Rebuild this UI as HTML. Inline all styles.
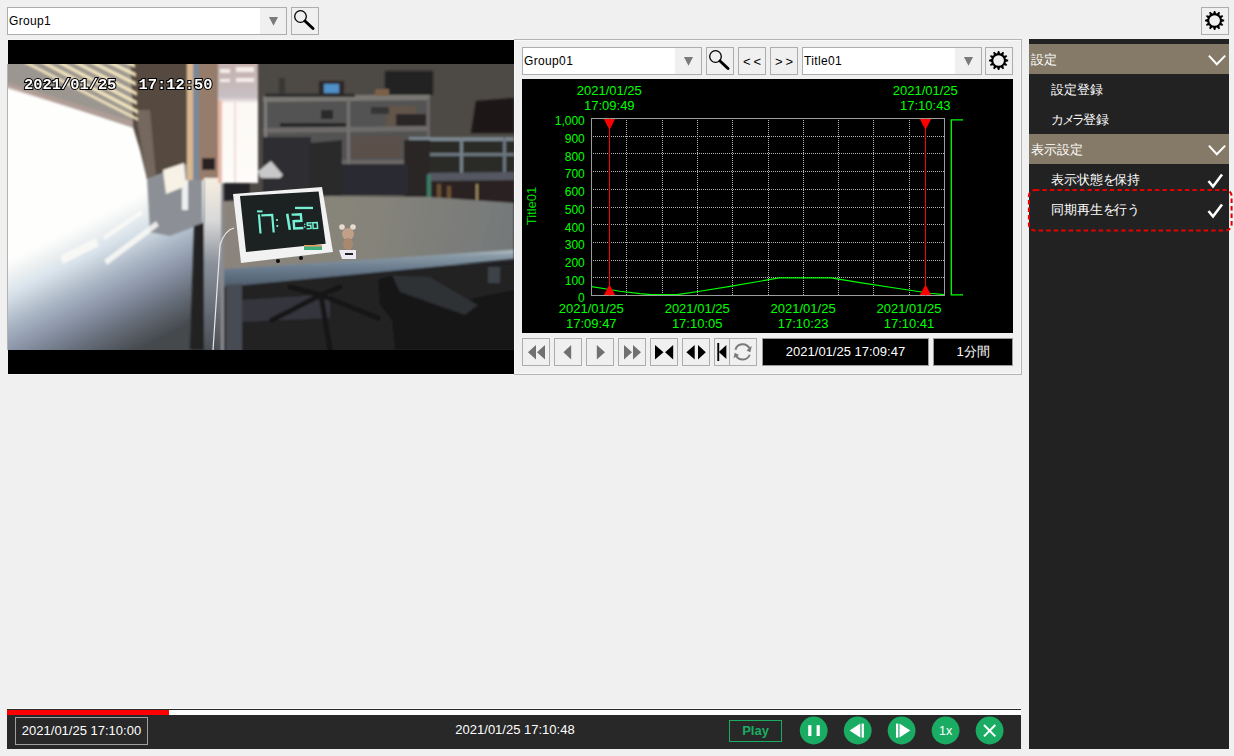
<!DOCTYPE html>
<html><head><meta charset="utf-8">
<style>
*{margin:0;padding:0;box-sizing:border-box}
html,body{width:1234px;height:756px;overflow:hidden;background:#f0f0f0;font-family:"Liberation Sans",sans-serif;font-size:12px;color:#000}
.a{position:absolute}
.btn{position:absolute;width:28px;height:28px;border:1px solid #adadad;background:#f0f0f0}
.combo{position:absolute;height:28px;border:1px solid #adadad;background:#fff}
.combo .dd{position:absolute;right:0;top:0;bottom:0;width:26px;background:#f0f0f0}
.combo .tri{position:absolute;width:0;height:0;border-left:5px solid transparent;border-right:5px solid transparent;border-top:9px solid #7a7a7a}
.combo .t{position:absolute;left:1px;top:6px;font-size:12px;line-height:14px;letter-spacing:0.35px}
.side{position:absolute;left:1029px;top:39px;width:200px;height:710px;background:#222}
.sh{position:absolute;left:0;width:200px;height:30px;background:#857a67;color:#fff;font-size:13px}
.si{position:absolute;left:0;width:200px;height:30px;color:#fff;font-size:13px}
</style></head><body>

<!-- top combo -->
<div class="combo" style="left:7px;top:7px;width:280px">
  <div class="t" style="left:1px">Group1</div>
  <div class="dd"><svg class="a" style="left:9px;top:9px" width="10" height="10"><polygon points="0,0 9,0 4.5,8.8" fill="#7a7a7a"/></svg></div>
</div>
<div class="btn" style="left:291px;top:7px">
  <svg width="26" height="26" class="a" style="left:0;top:0"><circle cx="8.5" cy="8.5" r="5.8" fill="none" stroke="#000" stroke-width="1.3"/><line x1="13" y1="13" x2="21" y2="20.5" stroke="#000" stroke-width="3" stroke-linecap="round"/></svg>
</div>
<div class="btn" style="left:1201px;top:7px">
  <svg width="26" height="26" class="a" style="left:0;top:0" id="gear1"><polygon points="11.21,5.33 11.93,2.92 13.27,2.92 13.99,5.33 14.98,5.60 16.81,3.87 17.97,4.54 17.39,6.99 18.11,7.71 20.56,7.13 21.23,8.29 19.50,10.12 19.77,11.11 22.18,11.83 22.18,13.17 19.77,13.89 19.50,14.88 21.23,16.71 20.56,17.87 18.11,17.29 17.39,18.01 17.97,20.46 16.81,21.13 14.98,19.40 13.99,19.67 13.27,22.08 11.93,22.08 11.21,19.67 10.22,19.40 8.39,21.13 7.23,20.46 7.81,18.01 7.09,17.29 4.64,17.87 3.97,16.71 5.70,14.88 5.43,13.89 3.02,13.17 3.02,11.83 5.43,11.11 5.70,10.12 3.97,8.29 4.64,7.13 7.09,7.71 7.81,6.99 7.23,4.54 8.39,3.87 10.22,5.60" fill="#000"/><circle cx="12.6" cy="12.5" r="5.3" fill="#f0f0f0"/></svg>
</div>

<!-- main panel -->
<div class="a" style="left:7px;top:39px;width:507px;height:1px;background:#f4f4f4"></div>
<div class="a" style="left:7px;top:374px;width:507px;height:1px;background:#f4f4f4"></div>
<div class="a" style="left:7px;top:64px;width:1px;height:286px;background:#b4b4b4"></div>
<div class="a" style="left:514px;top:39px;width:508px;height:336px;border:1px solid #b4b4b4;border-left:none;box-shadow:inset 1px 1px 0 #f8f8f8,inset -1px -1px 0 #f8f8f8;background:#f0f0f0"></div>
<div class="a" style="left:8px;top:40px;width:506px;height:334px;background:#000"></div>
<div class="a" id="photo" style="left:8px;top:64px;width:506px;height:286px;background:#777;overflow:hidden"><svg width="506" height="286" style="position:absolute;left:0;top:0">
<defs>
<filter id="bl" x="-5%" y="-5%" width="110%" height="110%"><feGaussianBlur stdDeviation="1.1"/></filter>
<filter id="bl0" x="-5%" y="-5%" width="110%" height="110%"><feGaussianBlur stdDeviation="0.45"/></filter>
<filter id="bl3" x="-30%" y="-30%" width="160%" height="160%"><feGaussianBlur stdDeviation="8"/></filter>
<filter id="bl4" x="-30%" y="-30%" width="160%" height="160%"><feGaussianBlur stdDeviation="4"/></filter>
<linearGradient id="lwalld" gradientUnits="userSpaceOnUse" x1="106" y1="212" x2="168" y2="336">
<stop offset="0" stop-color="#fefefc"/><stop offset="0.08" stop-color="#f2f4f4"/><stop offset="0.226" stop-color="#d8e2ea"/><stop offset="0.419" stop-color="#aab6c4"/><stop offset="0.581" stop-color="#8c96a8"/><stop offset="0.774" stop-color="#68707c"/><stop offset="1" stop-color="#44484c"/>
</linearGradient>
<linearGradient id="curt" gradientUnits="userSpaceOnUse" x1="0" y1="64" x2="0" y2="183">
<stop offset="0" stop-color="#c4b0ac"/><stop offset="0.28" stop-color="#c8c0c4"/><stop offset="0.33" stop-color="#fcf8f4"/><stop offset="1" stop-color="#fefcfa"/>
</linearGradient>
<linearGradient id="tableg" gradientUnits="userSpaceOnUse" x1="224" y1="196" x2="514" y2="260">
<stop offset="0" stop-color="#8c847c"/><stop offset="0.5" stop-color="#86847a"/><stop offset="1" stop-color="#74787a"/>
</linearGradient>
<linearGradient id="bandg" gradientUnits="userSpaceOnUse" x1="0" y1="250" x2="0" y2="287">
<stop offset="0" stop-color="#b8c4c8"/><stop offset="0.15" stop-color="#8a9aa6"/><stop offset="0.5" stop-color="#6a7c8e"/><stop offset="1" stop-color="#4e5c6a"/>
</linearGradient>
<linearGradient id="postg" gradientUnits="userSpaceOnUse" x1="0" y1="178" x2="0" y2="350">
<stop offset="0" stop-color="#f6eee0"/><stop offset="0.25" stop-color="#d8d8d8"/><stop offset="0.5" stop-color="#8a909a"/><stop offset="1" stop-color="#4a4e54"/>
</linearGradient>
</defs>
<g transform="translate(-8,-64)">
<g filter="url(#bl)">
<!-- base under table -->
<rect x="0" y="50" width="520" height="310" fill="#242426"/>
<!-- back wall -->
<rect x="250" y="50" width="270" height="150" fill="#4e4a44"/>
<!-- left wall -->
<polygon points="0,50 204,50 204,360 0,360" fill="url(#lwalld)"/>
</g>
<g filter="url(#bl)">
<!-- stripe zone top-left -->
<polygon points="0,50 131,50 134,128 0,84" fill="#9c9690"/>
<polygon points="0,80 138,123 138,128 0,86" fill="#b8a098" opacity="0.7"/>
<!-- pillar -->
<polygon points="130,50 188,50 188,164 147,179 140,150 133,127" fill="#544a40"/>
<polygon points="136,110 150,110 156,176 147,179 138,127" fill="#74685e"/>
<!-- gray wall under pillar -->
<polygon points="147,179 188,164 202,172 202,224 170,236 150,232" fill="#8c9096"/>
<rect x="182" y="180" width="6" height="30" fill="#eef0f0"/>
<!-- bright patch under pillar -->
<polygon points="163,170 184,163 186,186 166,194" fill="#f8f2e6"/>
<!-- strip & column -->
<rect x="187" y="50" width="6" height="130" fill="#d8b890"/>
<rect x="193" y="50" width="6" height="130" fill="#7a8898"/>
<rect x="199" y="50" width="19" height="130" fill="#967c6a"/>
<rect x="202" y="158" width="13" height="12" fill="#2a2222"/>
<!-- corner & gap -->
<polygon points="194,226 206,222 206,350 190,350" fill="#222224"/>
<!-- post -->
<rect x="204" y="178" width="17" height="180" fill="url(#postg)"/>
<rect x="221" y="178" width="3" height="180" fill="#8a8a8e"/>
<!-- curtain -->
<polygon points="218,50 258,50 258,183 218,183" fill="url(#curt)"/>
<rect x="218" y="100" width="4" height="83" fill="#e8b8a8"/>
<rect x="234" y="100" width="2" height="83" fill="#f0dcd8"/>
<rect x="220" y="69" width="10" height="4" fill="#f4ece8"/>
<rect x="236" y="67" width="18" height="5" fill="#f4ece8"/>
<rect x="220" y="79" width="10" height="3" fill="#f4ece8"/>
<rect x="236" y="78" width="18" height="4" fill="#f4ece8"/>
<!-- shelves interior -->
<rect x="263" y="100" width="167" height="65" fill="#525252"/>
<rect x="386" y="106" width="30" height="20" fill="#62554a"/>
<rect x="352" y="136" width="50" height="22" fill="#5a5048"/>
<polygon points="263,96 430,94 430,100 263,102" fill="#7a7874"/>
<polygon points="263,128 430,126 430,131 263,133" fill="#6e6c6a"/>
<rect x="342" y="160" width="64" height="4" fill="#6a6866"/>
<rect x="264" y="98" width="3" height="60" fill="#7e7c7a"/>
<rect x="347" y="98" width="3" height="95" fill="#747270"/>
<rect x="427" y="98" width="3" height="40" fill="#6a6866"/>
<rect x="321" y="110" width="12" height="9" fill="#2a2a2a"/>
<rect x="371" y="107" width="18" height="7" fill="#343434"/>
<rect x="280" y="123" width="66" height="4" fill="#262626"/>
<rect x="396" y="114" width="30" height="12" fill="#2a2826"/>
<!-- top items -->
<rect x="385" y="71" width="48" height="24" fill="#222020"/>
<rect x="319" y="81" width="25" height="16" fill="#2e2626"/>
<rect x="324" y="84" width="15" height="9" fill="#5090c8"/>
<rect x="279" y="78" width="6" height="19" fill="#383836"/>
<rect x="375" y="89" width="14" height="7" fill="#7a6048"/>
<rect x="265" y="94" width="90" height="3" fill="#2a2a2a"/>
<!-- right monitor -->
<polygon points="476,101 514,98 514,133 471,133" fill="#1a1816"/>
<!-- rack -->
<rect x="409" y="137" width="105" height="37" fill="#2a2c26"/>
<rect x="409" y="137" width="105" height="4" fill="#7a868e"/>
<rect x="409" y="153" width="105" height="3" fill="#6a767e"/>
<rect x="460" y="137" width="3" height="37" fill="#76828a"/>
<rect x="503" y="137" width="3" height="37" fill="#6a767e"/>
<rect x="404" y="140" width="26" height="57" fill="#2a2828"/>
<!-- lower shelf interior -->
<rect x="342" y="164" width="66" height="31" fill="#2a2c30"/>
<!-- dark monitor & chair back -->
<rect x="263" y="137" width="48" height="58" fill="#2e2e30"/>
<polygon points="309,143 342,140 342,198 309,200" fill="#2c2c2c"/>
<!-- paper -->
<polygon points="258,171 271,161 283,175 280,178 260,178" fill="#c8c8c8"/>
<!-- dark box -->
<polygon points="428,173 514,172 514,181 428,182" fill="#545862"/>
<polygon points="428,181 514,180 514,206 430,203" fill="#2a2420"/>
<rect x="437" y="184" width="4" height="15" fill="#6a5030"/>
<rect x="447" y="186" width="4" height="14" fill="#6a5030"/>
<rect x="476" y="184" width="2" height="20" fill="#a09060"/>
<rect x="427" y="175" width="4" height="28" fill="#3a7a68"/>
<!-- floor -->
<rect x="224" y="265" width="290" height="95" fill="#222224"/>
<polygon points="242,300 330,294 330,318 242,322" fill="#34363c"/>
<!-- table top -->
<polygon points="224,201 330,196 428,197 514,203 514,252 224,270" fill="url(#tableg)"/>
<!-- front band -->
<polygon points="224,269 514,250 514,259 224,287" fill="url(#bandg)"/>
<!-- left leg -->
<polygon points="226,285 242,284 242,360 226,360" fill="#464c52"/>
<!-- right leg -->
<rect x="488" y="267" width="12" height="16" fill="#3e424a"/>
<!-- chair base -->
<g stroke="#141416" stroke-width="5" stroke-linecap="round" fill="none">
<path d="M321,295 L272,320 M321,295 L378,318 M321,295 L340,287 M321,295 L290,287 M321,295 L330,350"/>
</g>
<!-- right chair -->
<polygon points="378,280 395,274 430,278 465,300 514,290 514,350 395,350 392,320 380,305" fill="#181818"/>
<polygon points="392,275 430,277 478,305 465,315 400,292" fill="#2e3036"/>
</g>
<!-- light stripes (blinds) -->
<g filter="url(#bl)" fill="#f8eac0" opacity="0.95">
<polygon points="112,50 118,50 134,56 134,60"/>
<polygon points="96,50 103,50 135,64 135,68"/>
<polygon points="80,50 87,50 136,73 136,77"/>
<polygon points="64,50 71,50 136,82 136,86"/>
<polygon points="48,50 55,50 137,92 137,96"/>
<polygon points="32,50 39,50 137,101 137,105"/>
<polygon points="16,50 23,50 138,110 138,114"/>
<polygon points="2,52 8,52 138,118 138,121"/>
</g>
<!-- wall light streaks -->
<g filter="url(#bl)" fill="#fbfaf6" opacity="0.85">
<polygon points="103,236 141,210 143,214 105,240"/>
<polygon points="104,260 156,221 159,226 107,265"/>
<polygon points="60,256 96,238 99,246 63,264"/>
</g>
<!-- tablet -->
<g filter="url(#bl0)">
<polygon points="233,194 322,187 333,252 241,263" fill="#f2f2f2"/>
<polygon points="240,196 318.6,191.4 325.7,243.8 246,252" fill="#1c2024"/>
<rect x="304" y="246" width="18" height="4" fill="#40b080"/>
<rect x="304" y="245" width="18" height="1.5" fill="#e8a060"/>
<circle cx="278" cy="261" r="2" fill="#111"/><circle cx="301" cy="258" r="2" fill="#111"/>
</g>
<!-- bear -->
<g filter="url(#bl0)">
<circle cx="342" cy="227" r="2.8" fill="#e8dcd0"/><circle cx="353" cy="227" r="2.8" fill="#e8dcd0"/>
<ellipse cx="348" cy="234" rx="6" ry="6" fill="#c0a088"/>
<ellipse cx="348" cy="244" rx="5" ry="6" fill="#a88870"/>
<polygon points="339,250 356,250 356,259 342,259" fill="#eceaf0"/>
<rect x="345" y="253" width="8" height="2" fill="#222"/>
</g>
<!-- cable -->
<path d="M234,228 Q225,230 220,245 L213,350" fill="none" stroke="#e8e8ec" stroke-width="1.2" filter="url(#bl0)"/>
<!-- tablet digits -->
<g fill="none" stroke="#74f0d4" stroke-linecap="square" stroke-linejoin="miter" filter="url(#bl0)">
<path d="M259,215.4 L260.4,232.4" stroke-width="2.2"/>
<path d="M262.4,215.4 L272.2,214.8 L273.6,231.4" stroke-width="2.2"/>
<path d="M287.4,215 L289.6,228.6" stroke-width="2.6"/>
<path d="M292.8,214.6 L300.8,214.2 L301.4,220.8 L293.6,221.2 L294.2,228.4 L302.2,228" stroke-width="2.4"/>
<path d="M311,222.8 L307.2,223 L307.4,225.4 L310.8,225.2 L311,228.4 L307.4,228.6" stroke-width="1.5"/>
<path d="M312.8,222.8 L317.2,222.6 L317.6,228.2 L313.2,228.4 Z" stroke-width="1.5"/>
</g>
<g fill="#74f0d4" filter="url(#bl0)">
<circle cx="277" cy="220" r="1.1"/><circle cx="277.3" cy="226" r="1.1"/>
<circle cx="304.7" cy="224.3" r="0.8"/><circle cx="304.8" cy="226.9" r="0.8"/>
<rect x="257" y="210.4" width="5.5" height="2"/>
<rect x="295" y="206.8" width="18" height="2.3"/>
</g>
<!-- timestamp -->
<g font-family="Liberation Mono, monospace" font-weight="bold" font-size="15.4" fill="#fff" stroke="#000" stroke-width="2.1" paint-order="stroke">
<text x="24" y="88.6">2021/01/25</text>
<text x="138.5" y="88.6">17:12:50</text>
</g>
</g>
</svg>
</div>

<!-- chart controls -->
<div class="combo" style="left:522px;top:47px;width:180px">
  <div class="t">Group01</div>
  <div class="dd"><svg class="a" style="left:9px;top:9px" width="10" height="10"><polygon points="0,0 9,0 4.5,8.8" fill="#7a7a7a"/></svg></div>
</div>
<div class="btn" style="left:706px;top:47px">
  <svg width="26" height="26" class="a" style="left:0;top:0"><circle cx="8.5" cy="8.5" r="5.8" fill="none" stroke="#000" stroke-width="1.3"/><line x1="13" y1="13" x2="21" y2="20.5" stroke="#000" stroke-width="3" stroke-linecap="round"/></svg>
</div>
<div class="btn" style="left:738px;top:47px;font-size:13px;text-align:center;line-height:27px;letter-spacing:3px;text-indent:3px">&lt;&lt;</div>
<div class="btn" style="left:770px;top:47px;font-size:13px;text-align:center;line-height:27px;letter-spacing:3px;text-indent:3px">&gt;&gt;</div>
<div class="combo" style="left:802px;top:47px;width:180px">
  <div class="t">Title01</div>
  <div class="dd"><svg class="a" style="left:9px;top:9px" width="10" height="10"><polygon points="0,0 9,0 4.5,8.8" fill="#7a7a7a"/></svg></div>
</div>
<div class="btn" style="left:985px;top:47px">
  <svg width="26" height="26" class="a" style="left:0;top:0" id="gear2"><polygon points="11.21,5.33 11.93,2.92 13.27,2.92 13.99,5.33 14.98,5.60 16.81,3.87 17.97,4.54 17.39,6.99 18.11,7.71 20.56,7.13 21.23,8.29 19.50,10.12 19.77,11.11 22.18,11.83 22.18,13.17 19.77,13.89 19.50,14.88 21.23,16.71 20.56,17.87 18.11,17.29 17.39,18.01 17.97,20.46 16.81,21.13 14.98,19.40 13.99,19.67 13.27,22.08 11.93,22.08 11.21,19.67 10.22,19.40 8.39,21.13 7.23,20.46 7.81,18.01 7.09,17.29 4.64,17.87 3.97,16.71 5.70,14.88 5.43,13.89 3.02,13.17 3.02,11.83 5.43,11.11 5.70,10.12 3.97,8.29 4.64,7.13 7.09,7.71 7.81,6.99 7.23,4.54 8.39,3.87 10.22,5.60" fill="#000"/><circle cx="12.6" cy="12.5" r="5.3" fill="#f0f0f0"/></svg>
</div>

<!-- chart -->
<div class="a" style="left:522px;top:79px;width:491px;height:254px;background:#000"></div>
<svg class="a" style="left:522px;top:79px" width="491" height="254" id="chart" font-family="Liberation Sans, sans-serif"><line x1="104.5" y1="41.0" x2="104.5" y2="216.5" stroke="#b4b4b4" stroke-width="1" stroke-dasharray="1 1"/>
<line x1="140.5" y1="41.0" x2="140.5" y2="216.5" stroke="#b4b4b4" stroke-width="1" stroke-dasharray="1 1"/>
<line x1="175.5" y1="41.0" x2="175.5" y2="216.5" stroke="#b4b4b4" stroke-width="1" stroke-dasharray="1 1"/>
<line x1="210.5" y1="41.0" x2="210.5" y2="216.5" stroke="#b4b4b4" stroke-width="1" stroke-dasharray="1 1"/>
<line x1="246.5" y1="41.0" x2="246.5" y2="216.5" stroke="#b4b4b4" stroke-width="1" stroke-dasharray="1 1"/>
<line x1="281.5" y1="41.0" x2="281.5" y2="216.5" stroke="#b4b4b4" stroke-width="1" stroke-dasharray="1 1"/>
<line x1="316.5" y1="41.0" x2="316.5" y2="216.5" stroke="#b4b4b4" stroke-width="1" stroke-dasharray="1 1"/>
<line x1="351.5" y1="41.0" x2="351.5" y2="216.5" stroke="#b4b4b4" stroke-width="1" stroke-dasharray="1 1"/>
<line x1="387.5" y1="41.0" x2="387.5" y2="216.5" stroke="#b4b4b4" stroke-width="1" stroke-dasharray="1 1"/>
<line x1="71.0" y1="57.5" x2="422.5" y2="57.5" stroke="#b4b4b4" stroke-width="1" stroke-dasharray="1 1"/>
<line x1="71.0" y1="74.5" x2="422.5" y2="74.5" stroke="#b4b4b4" stroke-width="1" stroke-dasharray="1 1"/>
<line x1="71.0" y1="92.5" x2="422.5" y2="92.5" stroke="#b4b4b4" stroke-width="1" stroke-dasharray="1 1"/>
<line x1="71.0" y1="110.5" x2="422.5" y2="110.5" stroke="#b4b4b4" stroke-width="1" stroke-dasharray="1 1"/>
<line x1="71.0" y1="128.5" x2="422.5" y2="128.5" stroke="#b4b4b4" stroke-width="1" stroke-dasharray="1 1"/>
<line x1="71.0" y1="145.5" x2="422.5" y2="145.5" stroke="#b4b4b4" stroke-width="1" stroke-dasharray="1 1"/>
<line x1="71.0" y1="163.5" x2="422.5" y2="163.5" stroke="#b4b4b4" stroke-width="1" stroke-dasharray="1 1"/>
<line x1="71.0" y1="181.5" x2="422.5" y2="181.5" stroke="#b4b4b4" stroke-width="1" stroke-dasharray="1 1"/>
<line x1="71.0" y1="198.5" x2="422.5" y2="198.5" stroke="#b4b4b4" stroke-width="1" stroke-dasharray="1 1"/>
<polyline points="69.5,207.6 83.0,209.8 98.0,212.2 118.0,214.6 129.0,215.6 155.0,215.6 178.0,212.2 208.0,207.4 238.0,202.2 257.0,198.9 309.0,198.9 338.0,203.6 378.0,209.8 408.0,214.2 422.0,215.6" fill="none" stroke="#00ff00" stroke-width="1.15"/>
<rect x="69.5" y="39.5" width="353.0" height="177.0" fill="none" stroke="#9c9c9c" stroke-width="1"/>
<line x1="87.5" y1="39.5" x2="87.5" y2="216.5" stroke="#f00" stroke-width="1"/>
<polygon points="81.9,40.0 93.1,40.0 87.5,51.0" fill="#f00"/>
<polygon points="81.9,216.0 93.1,216.0 87.5,205.5" fill="#f00"/>
<line x1="403.5" y1="39.5" x2="403.5" y2="216.5" stroke="#f00" stroke-width="1"/>
<polygon points="397.9,40.0 409.1,40.0 403.5,51.0" fill="#f00"/>
<polygon points="397.9,216.0 409.1,216.0 403.5,205.5" fill="#f00"/>
<text x="62.799999999999955" y="46.3" text-anchor="end" fill="#00ff00" font-size="12">1,000</text>
<text x="62.799999999999955" y="64.0" text-anchor="end" fill="#00ff00" font-size="12">900</text>
<text x="62.799999999999955" y="81.7" text-anchor="end" fill="#00ff00" font-size="12">800</text>
<text x="62.799999999999955" y="99.4" text-anchor="end" fill="#00ff00" font-size="12">700</text>
<text x="62.799999999999955" y="117.1" text-anchor="end" fill="#00ff00" font-size="12">600</text>
<text x="62.799999999999955" y="134.8" text-anchor="end" fill="#00ff00" font-size="12">500</text>
<text x="62.799999999999955" y="152.5" text-anchor="end" fill="#00ff00" font-size="12">400</text>
<text x="62.799999999999955" y="170.2" text-anchor="end" fill="#00ff00" font-size="12">300</text>
<text x="62.799999999999955" y="187.9" text-anchor="end" fill="#00ff00" font-size="12">200</text>
<text x="62.799999999999955" y="205.6" text-anchor="end" fill="#00ff00" font-size="12">100</text>
<text x="62.799999999999955" y="223.3" text-anchor="end" fill="#00ff00" font-size="12">0</text>
<text x="87.29999999999995" y="16.299999999999997" text-anchor="middle" fill="#00ff00" font-size="13">2021/01/25</text>
<text x="87.29999999999995" y="31.299999999999997" text-anchor="middle" fill="#00ff00" font-size="13">17:09:49</text>
<text x="403.29999999999995" y="16.299999999999997" text-anchor="middle" fill="#00ff00" font-size="13">2021/01/25</text>
<text x="403.29999999999995" y="31.299999999999997" text-anchor="middle" fill="#00ff00" font-size="13">17:10:43</text>
<text x="69.3" y="234" text-anchor="middle" fill="#00ff00" font-size="13">2021/01/25</text>
<text x="69.3" y="249.3" text-anchor="middle" fill="#00ff00" font-size="13">17:09:47</text>
<text x="175.2" y="234" text-anchor="middle" fill="#00ff00" font-size="13">2021/01/25</text>
<text x="175.2" y="249.3" text-anchor="middle" fill="#00ff00" font-size="13">17:10:05</text>
<text x="281.1" y="234" text-anchor="middle" fill="#00ff00" font-size="13">2021/01/25</text>
<text x="281.1" y="249.3" text-anchor="middle" fill="#00ff00" font-size="13">17:10:23</text>
<text x="387.0" y="234" text-anchor="middle" fill="#00ff00" font-size="13">2021/01/25</text>
<text x="387.0" y="249.3" text-anchor="middle" fill="#00ff00" font-size="13">17:10:41</text>
<text transform="translate(13.5,127) rotate(-90)" text-anchor="middle" fill="#00d800" font-size="13">Title01</text>
<polyline points="441,40.9 429.29999999999995,40.9 429.29999999999995,215.8 441,215.8" fill="none" stroke="#00ff00" stroke-width="1.3"/></svg>

<!-- nav buttons -->
<div class="btn" style="left:522px;top:338px"></div>
<div class="btn" style="left:554px;top:338px"></div>
<div class="btn" style="left:586px;top:338px"></div>
<div class="btn" style="left:618px;top:338px"></div>
<div class="btn" style="left:650px;top:338px"></div>
<div class="btn" style="left:682px;top:338px"></div>
<div class="btn" style="left:714px;top:338px;width:43px"></div>
<div class="a" style="left:729px;top:339px;width:1px;height:26px;background:#adadad"></div>
<svg class="a" style="left:522px;top:338px" width="240" height="28" id="navicons"><polygon points="14,7 14,21.4 6,14.2" fill="#707070"/>
<polygon points="23,7 23,21.4 15,14.2" fill="#707070"/>
<polygon points="49.2,7 49.2,21.4 41.4,14.2" fill="#707070"/>
<polygon points="74.8,7 74.8,21.4 83,14.2" fill="#707070"/>
<polygon points="102,7 102,21.4 110,14.2" fill="#707070"/>
<polygon points="111,7 111,21.4 119,14.2" fill="#707070"/>
<polygon points="133,7 133,21.4 141.5,14.2" fill="#000"/>
<polygon points="151.2,7 151.2,21.4 143.1,14.2" fill="#000"/>
<polygon points="172.7,7 172.7,21.4 164.4,14.2" fill="#000"/>
<polygon points="176,7 176,21.4 183.8,14.2" fill="#000"/>
<rect x="195.3" y="5" width="1.9" height="18" fill="#000"/>
<polygon points="204.4,7.1 204.4,21 196.8,14" fill="#000"/>
<path d="M213.43,11.68 A7.6,7.6 0 0 1 227.41,10.33" fill="none" stroke="#7a7a7a" stroke-width="2"/>
<path d="M227.75,16.75 A7.6,7.6 0 0 1 214.12,17.70" fill="none" stroke="#7a7a7a" stroke-width="2"/>
<polygon points="229.89999999999998,7.7 224.5,12.6 228.29999999999998,14.200000000000001" fill="#7a7a7a"/>
<polygon points="211.5,20.3 212.7,14.700000000000001 217.1,17.1" fill="#7a7a7a"/></svg>
<div class="a" style="left:762px;top:338px;width:167px;height:28px;background:#000;border:1px solid #9a9a9a;color:#fff;font-size:13px;text-align:center;line-height:26px">2021/01/25 17:09:47</div>
<div class="a" style="left:933px;top:338px;width:80px;height:28px;background:#000;border:1px solid #9a9a9a;color:#fff;font-size:13px;text-align:center;line-height:26px">1分間</div>

<!-- bottom bar -->
<div class="a" style="left:7px;top:708px;width:1014px;height:1px;background:#fafafa"></div>
<div class="a" style="left:7px;top:709px;width:1014px;height:40px;background:#282828"></div>
<div class="a" style="left:7px;top:710px;width:1014px;height:5px;background:#fff"></div>
<div class="a" style="left:7px;top:710px;width:162px;height:5px;background:#f00"></div>
<div class="a" style="left:15px;top:717px;width:133px;height:28px;border:1px solid #a0a0a0;color:#fff;font-size:13px;text-align:center;line-height:26px">2021/01/25 17:10:00</div>
<div class="a" style="left:420px;top:722px;width:190px;color:#fff;font-size:13px;text-align:center;line-height:16px">2021/01/25 17:10:48</div>
<div class="a" style="left:729px;top:720px;width:53px;height:22px;border:1px solid #1aac63;color:#1aac63;font-size:13px;font-weight:bold;text-align:center;line-height:20px">Play</div>
<svg class="a" style="left:790px;top:712px" width="230" height="36" id="playicons" font-family="Liberation Sans, sans-serif"><circle cx="23.700000000000045" cy="18.5" r="13.9" fill="#1aac63"/>
<circle cx="67.70000000000005" cy="18.5" r="13.9" fill="#1aac63"/>
<circle cx="111.60000000000002" cy="18.5" r="13.9" fill="#1aac63"/>
<circle cx="155.60000000000002" cy="18.5" r="13.9" fill="#1aac63"/>
<circle cx="199.60000000000002" cy="18.5" r="13.9" fill="#1aac63"/>
<rect x="18.200000000000045" y="13.200000000000045" width="3.2" height="10.8" fill="#fff"/>
<rect x="26.600000000000023" y="13.200000000000045" width="3.2" height="10.8" fill="#fff"/>
<polygon points="70.29999999999995,11.600000000000023 70.29999999999995,25.600000000000023 59.60000000000002,18.600000000000023" fill="#fff"/>
<rect x="71.60000000000002" y="11.600000000000023" width="2.3" height="14" fill="#fff"/>
<rect x="106" y="11.600000000000023" width="2.3" height="14" fill="#fff"/>
<polygon points="109.5,11.600000000000023 109.5,25.600000000000023 120.29999999999995,18.600000000000023" fill="#fff"/>
<text x="155.60000000000002" y="23.299999999999955" text-anchor="middle" fill="#fff" font-size="12.5">1x</text>
<path d="M194,13 L205.29999999999995,24.399999999999977 M205.29999999999995,13 L194,24.399999999999977" stroke="#fff" stroke-width="2"/></svg>

<!-- sidebar -->
<div class="side">
  <div class="sh" style="top:5px"><span class="a" style="left:2px;top:7px">設定</span></div>
  <div class="si" style="top:35px"><span class="a" style="left:22px;top:7px">設定登録</span></div>
  <div class="si" style="top:65px"><span class="a" style="left:22px;top:7px"><span style="letter-spacing:-2.5px">カメラ</span>登録</span></div>
  <div class="sh" style="top:95px"><span class="a" style="left:2px;top:7px">表示設定</span></div>
  <div class="si" style="top:125px"><span class="a" style="left:22px;top:7px">表示状態<span style="letter-spacing:-2px">を</span>保持</span></div>
  <div class="si" style="top:155px"><span class="a" style="left:22px;top:7px">同期再生<span style="letter-spacing:-2px">を</span>行<span style="letter-spacing:-2px">う</span></span></div>
</div>
<svg class="a" style="left:1020px;top:39px" width="214" height="200" id="sideicons"><polyline points="188.9000000000001,16.6 196.79999999999995,25.200000000000003 205.20000000000005,16.6" fill="none" stroke="#fff" stroke-width="2"/>
<polyline points="188.9000000000001,106.6 196.79999999999995,115.19999999999999 205.20000000000005,106.6" fill="none" stroke="#fff" stroke-width="2"/>
<path d="M188.5,142 L193,147.5 L202,135.5" fill="none" stroke="#fff" stroke-width="2.6"/>
<path d="M188.5,172 L193,177.5 L202,165.5" fill="none" stroke="#fff" stroke-width="2.6"/>
<rect x="8.900000000000091" y="151" width="202.69999999999982" height="40.5" rx="6" ry="6" fill="none" stroke="#e50000" stroke-width="2" stroke-dasharray="4.5 3"/></svg>

</body></html>
